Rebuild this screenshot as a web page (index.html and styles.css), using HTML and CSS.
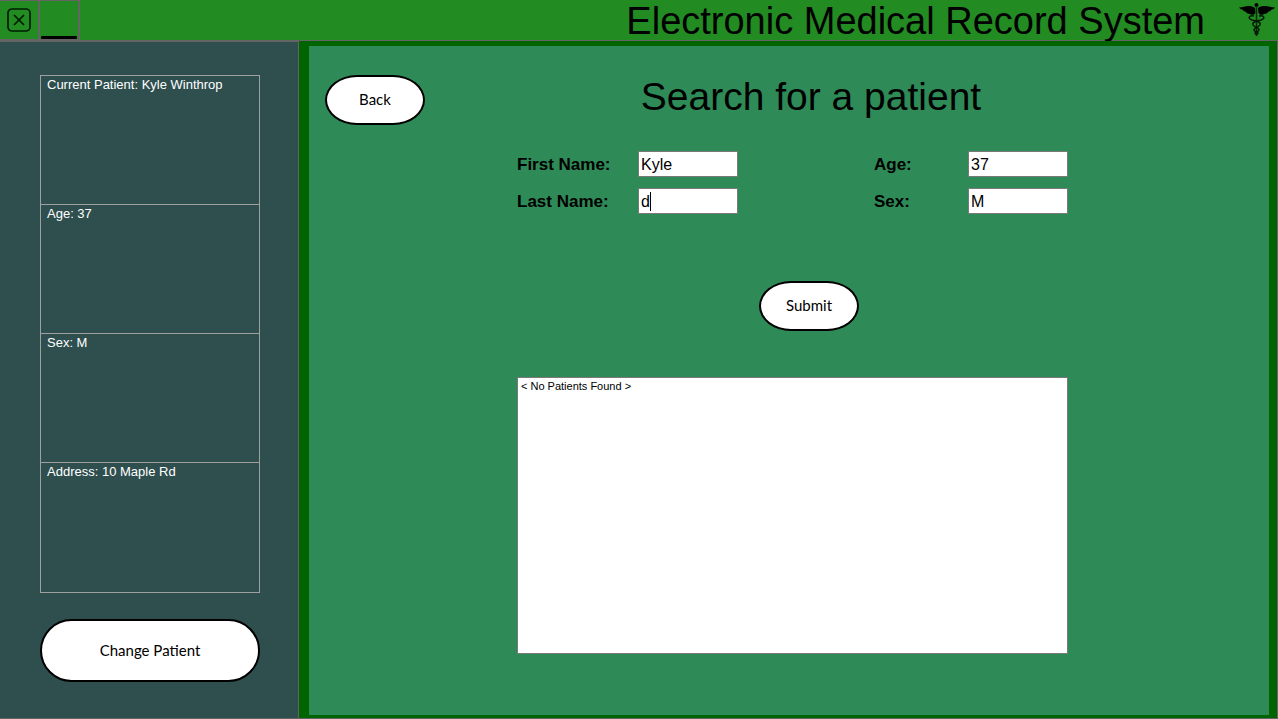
FILE: index.html
```
<!DOCTYPE html>
<html lang="en">
<head>
<meta charset="utf-8">
<meta name="viewport" content="width=device-width, initial-scale=1">
<title>Electronic Medical Record System</title>
<link rel="stylesheet" href="styles.css">
</head>
<body>
<header class="topbar">
  <button class="window-button" type="button" aria-label="Close">
    <svg viewBox="0 0 24 24" width="24" height="24" aria-hidden="true"><rect x="1" y="1" width="22" height="22" rx="4"/><path d="M7 7 17 17M17 7 7 17"/></svg>
  </button>
  <button class="window-button" type="button" aria-label="Minimize">
    <svg class="minimize-icon" viewBox="0 0 36 3" width="36" height="3" aria-hidden="true"><rect width="36" height="3" rx="1"/></svg>
  </button>
  <h1 class="app-title">Electronic Medical Record System</h1>
  <svg class="logo" viewBox="0 0 38 36" width="38" height="36" aria-hidden="true">
    <path class="solid" d="M17 6C12 2 6 5 1 5.500C2 7 4 7.500 5 8C5 9 7 9.500 8 10C9 11.500 10 11.500 12 12C14 13.500 16 13 17.500 11Z"/>
    <path class="solid" d="M20 6C25 2 31 5 37 5.500C36 7 34 7.500 33 8C33 9 31 9.500 30 10C29 11.500 28 11.500 26 12C24 13.500 22 13 20.500 11Z"/>
    <circle class="solid" cx="18.500" cy="3" r="2"/>
    <path class="rod" d="M18.500 4V34"/>
    <path class="snake" d="M16 14C10 13 10 17 14 18C19 19 23 20 22 23C21 25 16 25 16 28C16 30 20 29 20 31C20 32 18.500 32 18.500 33"/>
    <path class="snake" d="M21 14C27 13 27 17 23 18C18 19 14 20 15 23C16 25 21 25 21 28C21 30 17 29 17 31C17 32 18.500 32 18.500 33"/>
  </svg>
</header>
<div class="layout">
  <aside class="sidebar">
    <ul class="patient">
      <li>Current Patient: Kyle Winthrop</li>
      <li>Age: 37</li>
      <li>Sex: M</li>
      <li>Address: 10 Maple Rd</li>
    </ul>
    <button class="pill pill-large" type="button">Change Patient</button>
  </aside>
  <main class="frame">
    <section class="panel">
      <div class="panel-head">
        <button class="pill" type="button">Back</button>
        <h2 class="panel-title">Search for a patient</h2>
      </div>
      <form class="search">
        <div class="fields">
          <label for="first">First Name:</label>
          <input id="first" type="text" value="Kyle">
          <label for="age">Age:</label>
          <input id="age" type="text" value="37">
          <label for="last">Last Name:</label>
          <span class="active-field"><input id="last" type="text" value="d"><span class="caret"></span></span>
          <label for="sex">Sex:</label>
          <input id="sex" type="text" value="M">
        </div>
        <div class="actions"><button class="pill" type="button">Submit</button></div>
        <select class="results" size="10" aria-label="Search results">
          <option>&lt; No Patients Found &gt;</option>
        </select>
      </form>
    </section>
  </main>
</div>
</body>
</html>
```
FILE: styles.css
```
* { box-sizing: border-box; }

body {
  margin: 0;
  min-height: 100vh;
  display: flex;
  flex-direction: column;
  font-family: "Liberation Sans", Arial, sans-serif;
  color: #000;
}

.topbar {
  display: flex;
  height: 41px;
  background: #228b22;
  border-bottom: 1px solid #646464;
}

.window-button {
  display: flex;
  align-items: center;
  justify-content: center;
  width: 40px;
  padding: 0;
  background: transparent;
  border: solid #646464;
  border-width: 1px 2px 1px 0;
}

.window-button svg { fill: none; stroke: #001c00; stroke-width: 1.7; }
.window-button .minimize-icon { align-self: flex-end; fill: #000; stroke: none; }

.app-title {
  flex: 1;
  margin: 0;
  padding-right: 33px;
  text-align: right;
  font-size: 38px;
  line-height: 42px;
  font-weight: 400;
  white-space: nowrap;
}

.logo { margin: 2px 2px 0 0; }
.logo .solid { fill: #000; }
.logo .rod { stroke: #0a2a0a; stroke-width: 1.5; }
.logo .snake { fill: none; stroke: #041804; stroke-width: 1.5; }

.layout { flex: 1; display: flex; }

.sidebar {
  width: 299px;
  padding: 33px 38px 16px 40px;
  background: #2f4f4f;
  border: solid #646464;
  border-width: 1px 1px 1px 0;
}

.patient {
  margin: 0 0 26px;
  padding: 0;
  list-style: none;
  border: 1px solid #a0a0a0;
  border-bottom: 0;
  color: #fff;
  font-size: 13px;
  line-height: 17px;
}

.patient li { height: 129px; padding: 0 6px; border-bottom: 1px solid #a0a0a0; }
.patient li:last-child { height: 130px; }

.pill {
  width: 100px;
  height: 50px;
  padding: 0 0 2px;
  background: #fff;
  border: 2px solid #000;
  border-radius: 32px / 25px;
  font: 15px Lato, sans-serif;
  color: #000;
}

.pill-large { width: 100%; height: 63px; border-radius: 32px; }

.frame {
  flex: 1;
  display: flex;
  padding: 5px 8px 3px 10px;
  background: #006400;
  border: solid #646464;
  border-width: 0 1px 1px 0;
}

.panel { flex: 1; padding: 29px 9px 0 16px; background: #2e8b57; }
.panel-head { display: flex; }

.panel-title {
  flex: 1;
  margin: 0;
  padding-right: 63px;
  text-align: center;
  font-size: 39px;
  line-height: 44px;
  font-weight: 400;
}

.search { width: 551px; margin: 26px auto 0; }

.fields {
  display: grid;
  grid-template-columns: 121px 236px 94px 100px;
  row-gap: 11px;
  align-items: center;
}

.fields label { padding-top: 2px; font-size: 17px; font-weight: 700; }

.fields input {
  display: block;
  width: 100px;
  height: 26px;
  padding: 2px 2px 0;
  border: 1px solid #7a7a7a;
  background: #fff;
  font: 16px "Liberation Sans", Arial, sans-serif;
  color: #000;
}

.active-field { position: relative; }

.caret {
  position: absolute;
  left: 12px;
  top: 4px;
  width: 1px;
  height: 19px;
  background: #000;
}

.actions { display: flex; justify-content: center; padding: 67px 0 46px 33px; }

.results {
  display: block;
  width: 100%;
  height: 277px;
  padding: 1px;
  border: 1px solid #7a7a7a;
  border-radius: 0;
  background: #fff;
  font: 11px "Liberation Sans", Arial, sans-serif;
  overflow: hidden;
}

.results option { padding: 1px 2px; color: #000; }
```
